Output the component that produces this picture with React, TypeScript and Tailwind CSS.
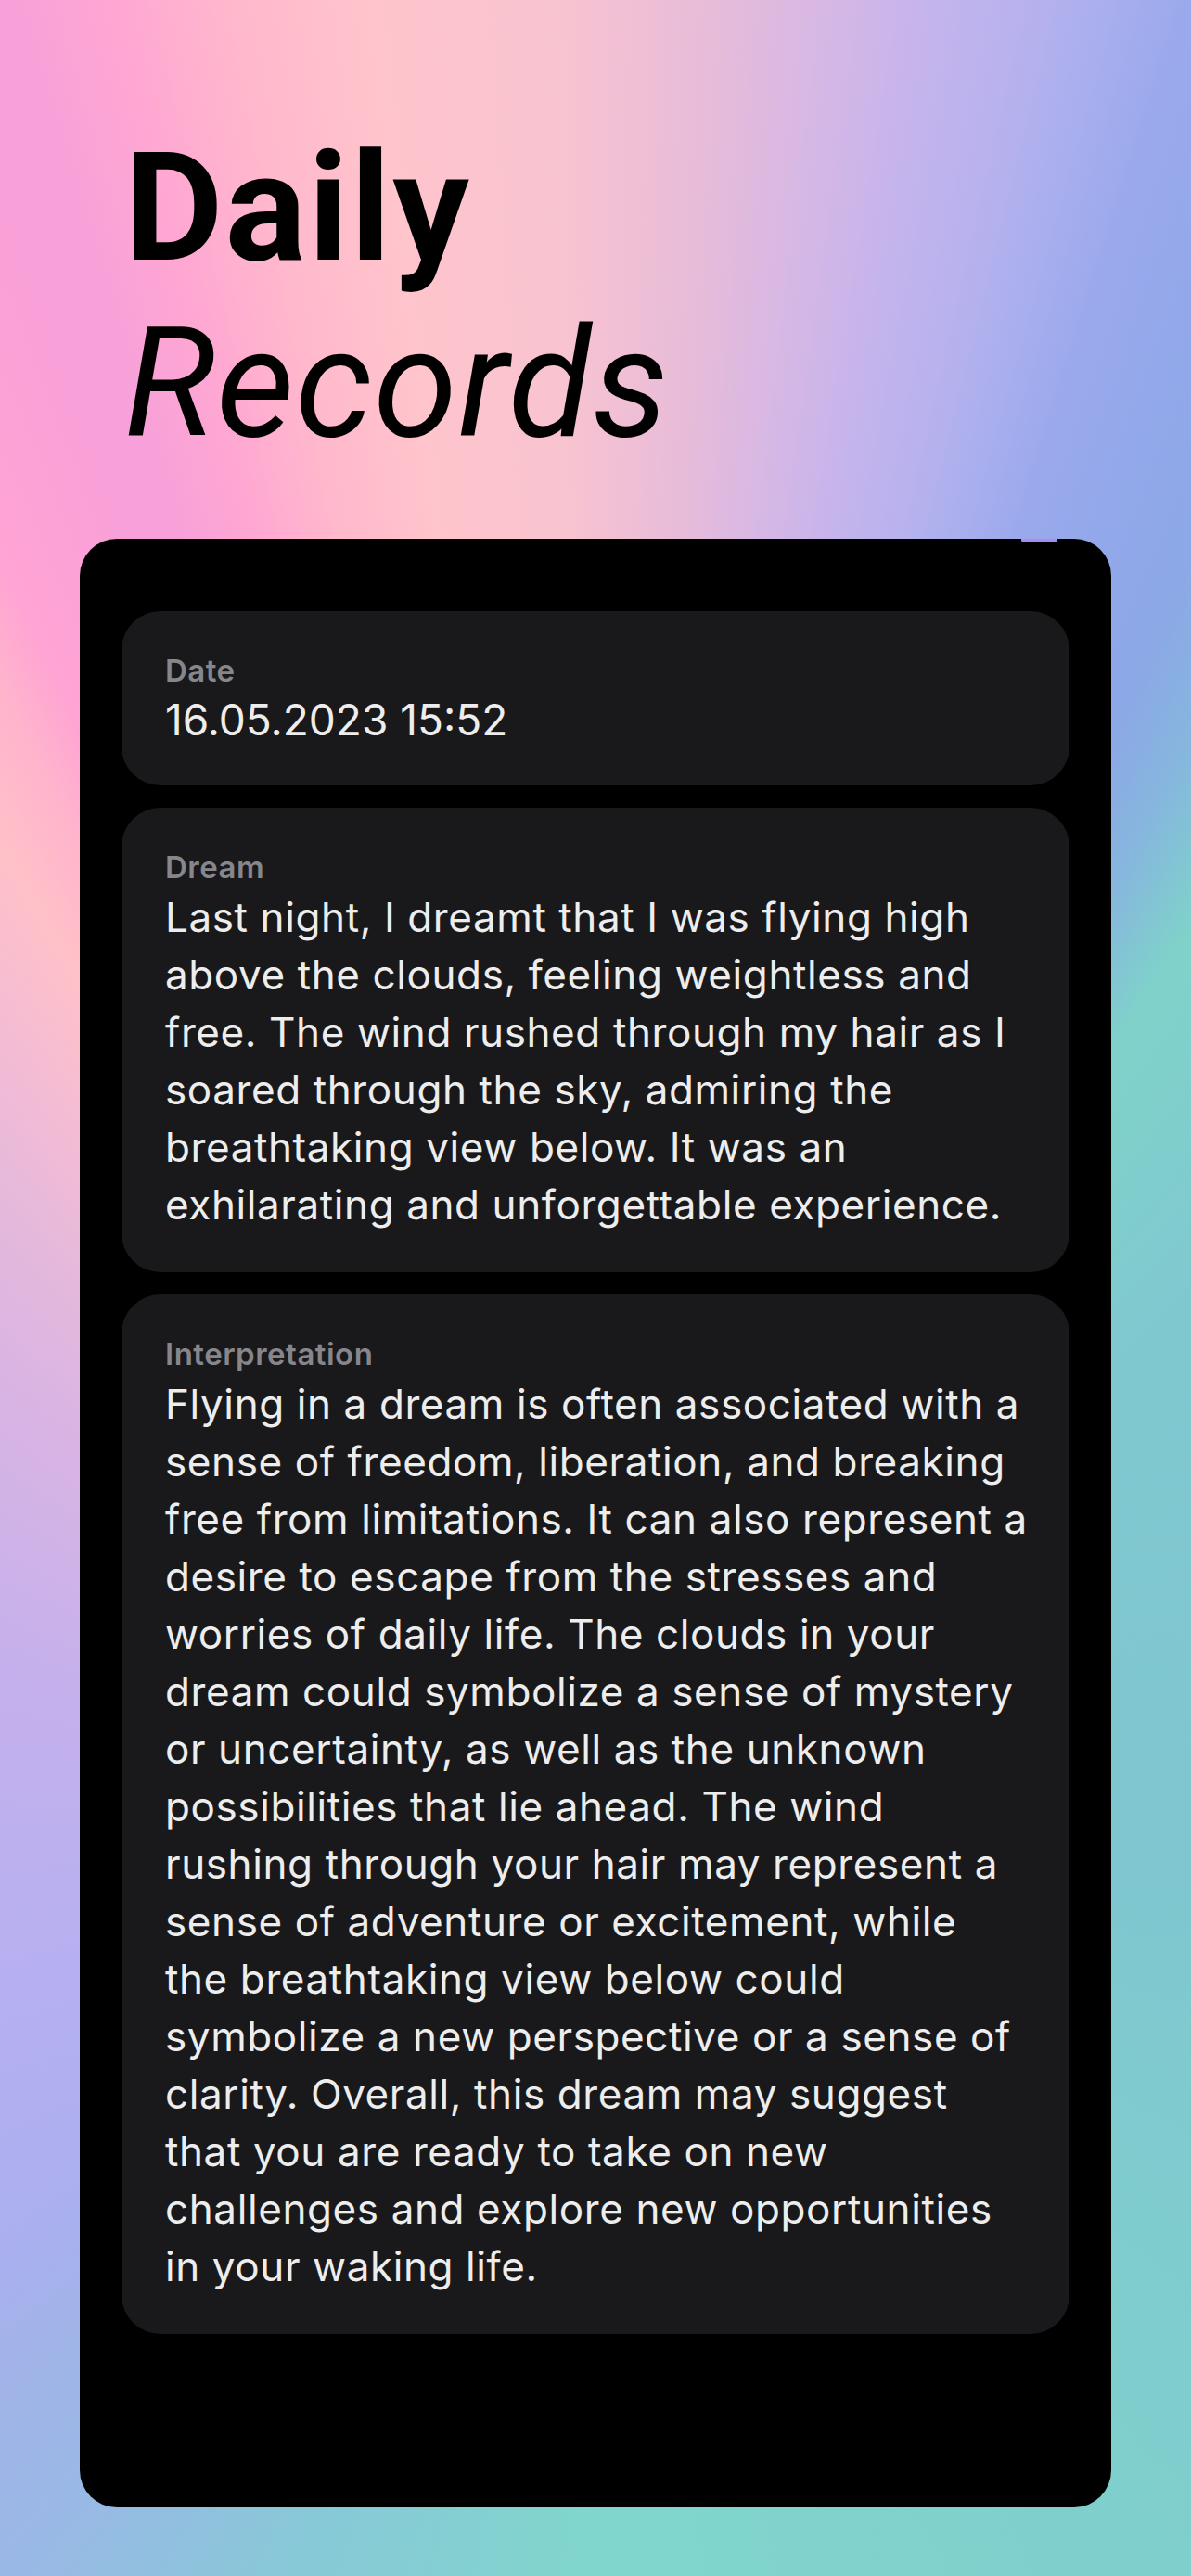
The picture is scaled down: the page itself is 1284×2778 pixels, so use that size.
import React from 'react'

const dream =
  'Last night, I dreamt that I was flying high above the clouds, feeling weightless and free. The wind rushed through my hair as I soared through the sky, admiring the breathtaking view below. It was an exhilarating and unforgettable experience.'

const interpretation =
  'Flying in a dream is often associated with a sense of freedom, liberation, and breaking free from limitations. It can also represent a desire to escape from the stresses and worries of daily life. The clouds in your dream could symbolize a sense of mystery or uncertainty, as well as the unknown possibilities that lie ahead. The wind rushing through your hair may represent a sense of adventure or excitement, while the breathtaking view below could symbolize a new perspective or a sense of clarity. Overall, this dream may suggest that you are ready to take on new challenges and explore new opportunities in your waking life.'

function Field({ label, children, big }: { label: string; children: React.ReactNode; big?: boolean }) {
  return (
    <div className="rounded-[42px] bg-[#19191b] pl-[47px] pr-[41px] pt-[46px] pb-[42px]">
      <div className="text-[33px] leading-[37px] font-semibold tracking-[0.5px] text-[#86868b]">{label}</div>
      <div
        className={
          big
            ? 'mt-[5px] text-[46px] leading-[58px] text-[#ededed]'
            : 'mt-[4px] text-[44px] leading-[62px] tracking-[0.6px] text-[#ededed]'
        }
      >
        {children}
      </div>
    </div>
  )
}

export default function App() {
  return (
    <div
      className="min-h-[2778px] w-full bg-[image:conic-gradient(from_0deg_at_50%_72%,#f4c1d3_0deg,#e8bcd8_3.4deg,#d8b8e4_6.8deg,#c6b4ec_10.1deg,#b8b2ee_13deg,#a8aeee_15.6deg,#9aa9ec_17.8deg,#92a8ea_21deg,#8ca8e6_24.6deg,#86b6de_28deg,#7fd2ca_32.7deg,#80c8d0_47deg,#7fc6d0_90deg,#7fcfcd_140deg,#80d6cc_180deg,#88c8d8_204deg,#9ab8e6_219.5deg,#a0b4e8_227deg,#acaff0_238deg,#b8b0f0_261deg,#c4b0ec_287deg,#d8b4e4_308deg,#e4b8dc_317.5deg,#f4bcd4_324.5deg,#ffc0c8_329.7deg,#ffb4cc_333deg,#ffa4d4_335.4deg,#f9a0d8_340deg,#f7a0da_342.2deg,#ffa8d2_345.7deg,#ffb8cc_348.9deg,#ffc4cc_353.1deg,#f8c4d0_358.8deg,#f4c1d3_360deg)] pt-[129px] pb-[74px]"
      style={{ fontFamily: 'Inter, "Noto Sans", sans-serif' }}
    >
      <h1
        className="pl-[134px] text-[164px] leading-[190px] text-black"
        style={{ fontFamily: 'Roboto, "Liberation Sans", sans-serif' }}
      >
        <span className="block font-bold tracking-[2px]">Daily</span>
        <span className="block italic font-normal tracking-[1px]">Records</span>
      </h1>

      <div className="relative mx-[86px] mt-[72px] h-[2123px] rounded-[40px] bg-black px-[45px] pt-[78px]">
        <span className="absolute top-0 right-[58px] h-[4px] w-[39px] rounded-b-[3px] bg-[#a98cf2] blur-[0.5px]" />
        <div className="flex flex-col gap-[24px]">
          <Field label="Date" big>
            16.05.2023 15:52
          </Field>
          <Field label="Dream">{dream}</Field>
          <Field label="Interpretation">{interpretation}</Field>
        </div>
      </div>
    </div>
  )
}
